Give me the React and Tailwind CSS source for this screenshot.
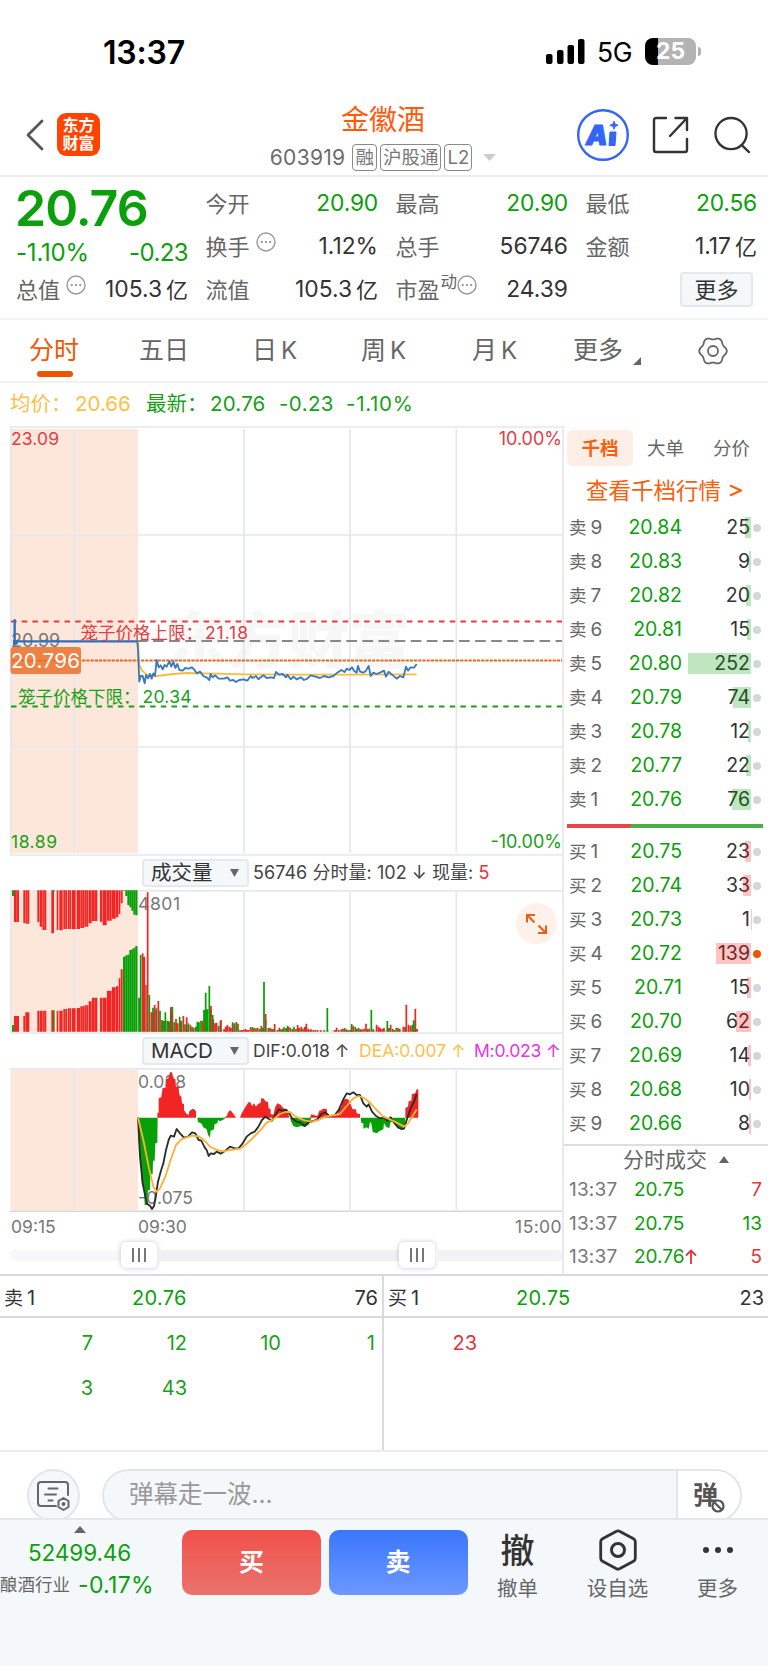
const SELLS = [
  ['卖9', '20.84', 25],
  ['卖8', '20.83', 9],
  ['卖7', '20.82', 20],
  ['卖6', '20.81', 15],
  ['卖5', '20.80', 252],
  ['卖4', '20.79', 74],
  ['卖3', '20.78', 12],
  ['卖2', '20.77', 22],
  ['卖1', '20.76', 76],
]

const BUYS = [
  ['买1', '20.75', 23],
  ['买2', '20.74', 33],
  ['买3', '20.73', 1],
  ['买4', '20.72', 139],
  ['买5', '20.71', 15],
  ['买6', '20.70', 62],
  ['买7', '20.69', 14],
  ['买8', '20.68', 10],
  ['买9', '20.66', 8],
]

const PRICE_LINE =
  '412,664 414,690 418,785 422,768 428,768 434,790 438,765 444,775 450,762 455,776 460,760 465,768 470,720 476,742 482,736 488,748 494,735 500,740 508,724 514,740 520,725 526,744 532,732 538,750 548,752 556,744 566,746 576,742 584,750 590,760 600,755 610,768 620,772 628,780 632,762 638,772 646,766 656,776 672,776 682,772 690,782 700,780 708,786 718,780 730,778 742,782 752,768 758,774 768,768 775,778 790,766 800,774 812,772 822,774 828,756 838,764 848,762 858,772 862,764 872,778 880,770 890,778 902,772 912,780 922,776 932,766 946,770 960,774 972,768 986,772 1000,768 1012,758 1024,750 1034,756 1040,746 1048,750 1056,742 1062,752 1070,758 1074,738 1080,755 1090,758 1098,752 1106,738 1112,768 1120,758 1130,762 1140,758 1152,752 1158,770 1166,755 1176,764 1190,776 1200,768 1210,772 1218,740 1224,752 1232,742 1242,743 1250,732'

const AVG_LINE = '414,665 418,735 426,752 440,764 470,768 520,762 560,759 640,761 740,763 900,764 1040,764 1250,763'

// call auction: [x from, x to, unmatched depth, matched top, colour]
const AUCTION = [
  [36, 42, 138, 525, 'g'], [42, 58, 216, 498, 'r'], [70, 76, 219, 498, 'r'], [76, 89, 221, 487, 'r'],
  [112, 119, 216, 482, 'r'], [119, 127, 230, 482, 'r'], [127, 140, 240, 482, 'r'], [154, 163, 250, 481, 'r'],
  [170, 176, 240, 482, 'r'], [178, 189, 241, 482, 'r'], [190, 202, 237, 477, 'r'], [203, 214, 237, 475, 'r'],
  [215, 228, 238, 475, 'r'], [230, 241, 237, 474, 'r'], [241, 253, 234, 469, 'r'], [253, 266, 230, 466, 'r'],
  [266, 276, 220, 454, 'r'], [276, 293, 213, 443, 'r'], [300, 308, 215, 443, 'r'], [308, 321, 226, 443, 'r'],
  [321, 336, 212, 422, 'r'], [336, 348, 206, 412, 'r'], [348, 356, 202, 409, 'r'], [356, 362, 192, 385, 'r'],
  [362, 369, 160, 358, 'r'], [369, 376, 122, 320, 'g'], [376, 382, 138, 316, 'g'], [382, 388, 165, 314, 'g'],
  [388, 394, 172, 300, 'g'], [394, 400, 182, 298, 'g'], [400, 406, 194, 293, 'g'], [406, 412, 196, 288, 'g'],
]

const VOL_RED = [
  [428, 310], [433, 320], [443, 127], [454, 487], [464, 465], [475, 453], [486, 510], [513, 471], [528, 507],
  [533, 520], [550, 498], [560, 502], [571, 524], [581, 533], [608, 512], [633, 468], [645, 520], [650, 518],
  [663, 510], [672, 538], [677, 530], [682, 525], [688, 530], [693, 533], [709, 516], [725, 541], [730, 539],
  [736, 537], [741, 540], [746, 540], [752, 532], [762, 534], [773, 533], [784, 527], [797, 492], [805, 534],
  [815, 536], [824, 522], [838, 533], [848, 536], [866, 531], [877, 537], [893, 525], [898, 534], [904, 530],
  [914, 531], [919, 521], [925, 536], [933, 538], [940, 540], [952, 540], [962, 541], [1005, 540], [1010, 533],
  [1024, 538], [1034, 534], [1044, 540], [1060, 527], [1076, 534], [1086, 538], [1092, 536], [1098, 521],
  [1108, 536], [1130, 524], [1136, 530], [1141, 535], [1147, 537], [1152, 534], [1172, 524], [1183, 540],
  [1194, 534], [1210, 530], [1219, 464], [1226, 524], [1232, 528], [1246, 476], [1251, 537],
]

const VOL_GREEN = [
  [417, 443], [422, 315], [448, 435], [459, 473], [469, 475], [480, 482], [491, 513], [496, 487], [502, 512],
  [507, 514], [517, 470], [523, 517], [539, 500], [544, 512], [555, 523], [565, 520], [576, 530], [587, 530],
  [592, 515], [597, 517], [603, 512], [612, 480], [617, 428], [622, 478], [628, 408], [638, 495], [656, 527],
  [698, 517], [704, 520], [714, 521], [720, 541], [757, 531], [768, 535], [779, 536], [788, 533], [792, 396],
  [810, 533], [819, 537], [832, 540], [843, 538], [852, 532], [858, 534], [863, 527], [871, 533], [882, 530],
  [888, 537], [909, 536], [930, 541], [946, 541], [972, 541], [982, 474], [1016, 540], [1029, 536], [1039, 538],
  [1050, 540], [1055, 522], [1066, 531], [1071, 536], [1081, 538], [1103, 537], [1114, 480], [1120, 538],
  [1162, 513], [1167, 534], [1178, 536], [1189, 533], [1199, 536], [1215, 531], [1237, 524], [1241, 511],
]

// bars where a buy and a sell column share one pixel column
const VOL_MIXED = [
  [438, 405], [459, 487], [469, 480], [486, 513], [507, 516], [512, 474], [517, 490], [544, 520], [560, 526],
  [632, 478], [640, 508], [661, 514], [698, 522], [797, 510], [1055, 530], [1246, 512],
]

const DIF_LINE =
  '414,233 420,350 428,430 436,470 442,492 450,497 456,507 462,498 468,465 474,425 482,395 490,370 498,330 506,300 512,287 522,290 530,267 540,280 552,293 564,290 576,277 586,280 596,300 604,302 614,322 620,330 626,348 632,340 642,342 650,335 662,341 676,332 690,320 704,325 716,325 728,310 740,290 752,280 764,275 774,262 786,240 796,230 806,236 816,242 826,225 836,208 846,212 858,210 868,220 876,235 890,245 902,248 914,258 926,246 940,243 952,238 964,222 976,217 988,228 1004,226 1016,210 1030,178 1040,160 1050,163 1060,157 1070,165 1080,165 1090,190 1100,200 1106,193 1116,215 1128,228 1140,235 1152,232 1162,243 1172,232 1182,248 1194,262 1204,267 1212,266 1220,240 1232,205 1242,185 1250,162'

const DEA_LINE =
  '414,233 430,300 446,380 460,440 470,455 480,445 496,410 512,360 528,315 544,298 560,292 576,287 596,289 612,300 630,320 650,330 670,334 690,330 720,326 736,315 752,300 770,282 786,265 800,248 820,238 840,222 856,216 870,216 884,228 900,236 916,242 936,245 956,240 976,230 1000,226 1020,222 1040,198 1060,175 1076,168 1092,174 1110,188 1130,210 1150,230 1170,238 1190,248 1212,260 1224,250 1238,228 1250,208'

const MACD_RED = [
  '472,233 472,218 476,218 476,175 484,172 488,143 497,143 497,118 505,115 510,97 516,97 520,115 526,118 528,140 536,140 538,165 544,170 546,190 552,192 552,210 558,220 566,226 568,213 576,208 580,206 588,213 588,233',
  '672,233 680,228 684,218 690,210 696,216 702,224 708,233',
  '720,233 724,222 732,208 738,198 746,186 752,188 756,198 762,190 768,200 774,192 782,188 784,174 792,176 796,184 804,186 806,205 812,208 812,222 820,224 826,200 832,190 842,194 850,205 862,208 868,233',
  '930,233 934,223 944,226 952,228 958,212 966,210 968,206 980,206 982,226 1004,228 1014,222 1016,208 1024,200 1028,182 1036,176 1044,178 1050,188 1058,208 1068,208 1070,220 1080,222 1080,233',
  '1216,233 1216,204 1224,200 1226,184 1234,182 1236,162 1246,160 1250,148 1255,148 1255,233',
]

const MACD_GREEN = [
  '414,233 417,330 422,372 424,405 426,435 432,440 434,495 442,495 444,450 450,450 451,402 458,402 459,362 464,362 466,310 472,308 473,233',
  '592,233 594,246 604,250 610,262 620,268 624,284 630,293 632,272 642,268 644,252 652,250 654,240 660,244 672,238 676,233',
  '870,233 874,246 880,258 890,262 904,258 914,260 926,254 934,233',
  '1082,233 1084,248 1090,250 1090,266 1100,262 1106,267 1110,246 1114,250 1118,276 1130,280 1140,272 1150,268 1152,250 1160,262 1168,264 1172,246 1184,246 1190,258 1204,266 1214,262 1216,233',
]

const UP = '#f22525'
const DOWN = '#08a008'

const bars = (list) => list.map(([x, top]) => `M${x} ${top}V545`).join('')

const gearPath = Array.from({ length: 72 }, (_, i) => {
  const a = (i * Math.PI) / 36
  const r = 12.7 + 1.1 * Math.cos(6 * a)
  return `${i ? 'L' : 'M'}${(15 + r * Math.cos(a)).toFixed(2)} ${(15 + r * Math.sin(a)).toFixed(2)}`
}).join('')

function StatusBar() {
  return (
    <div className="flex h-[91px] items-start justify-between pl-[103px] pr-[67px] pt-[38px]">
      <span className="text-[32px] font-semibold leading-[29px] tracking-[-0.2px] text-black">13:37</span>
      <div className="flex h-[27px] items-center">
        <svg width="39" height="26" viewBox="0 0 39 26">
          <rect x="0" y="15" width="6.5" height="10" rx="2" />
          <rect x="11" y="11" width="6.5" height="14" rx="2" />
          <rect x="21.5" y="6" width="6.5" height="19" rx="2" />
          <rect x="32" y="0" width="6.5" height="25" rx="2" />
        </svg>
        <span className="ml-[12px] w-[48px] pt-[2px] text-[26.5px] leading-none tracking-[-0.3px] text-black">5G</span>
        <span className="relative flex h-[27px] w-[51px] items-center justify-center overflow-hidden rounded-[8px] bg-[linear-gradient(90deg,#000_25%,#b3b3b3_25%)] text-[23px] font-bold leading-none text-white">
          25
        </span>
        <span className="ml-[2px] h-[9px] w-[3px] rounded-r-full bg-[#b3b3b3]" />
      </div>
    </div>
  )
}

function Tag({ children }) {
  return (
    <span className="flex h-[27px] shrink-0 items-center whitespace-nowrap rounded-[4px] border-[1.5px] border-[#8a8a8a] px-[2px] text-[18.5px] leading-none text-[#777]">
      {children}
    </span>
  )
}

function Header() {
  return (
    <header className="flex h-[86px] items-start border-b-2 border-[#ececec] pl-[25px] pr-[16px]">
      <div className="flex w-[226px] items-center pt-[22px]">
        <svg width="19" height="32" viewBox="0 0 19 32" fill="none" stroke="#555" strokeWidth="2.8">
          <path d="M17 2L3 16l14 14" strokeLinecap="round" strokeLinejoin="round" />
        </svg>
        <div className="ml-[13px] flex h-[43px] w-[43px] flex-col items-center justify-center rounded-[9px] bg-[#ff4400] text-[16px] font-bold leading-[17.5px] text-white">
          <span>东方</span>
          <span>财富</span>
        </div>
      </div>
      <div className="ml-[20px] flex w-[224px] flex-col items-center pt-[15px]">
        <span className="text-[28px] leading-[29px] text-[#ff5a0a]">金徽酒</span>
        <div className="mt-[9px] flex h-[27px] items-center gap-[3px]">
          <span className="mr-[4px] text-[21px] leading-none tracking-[0.3px] text-[#6b6b6b]">603919</span>
          <Tag>融</Tag>
          <Tag>沪股通</Tag>
          <Tag>L2</Tag>
          <svg className="ml-[8px] shrink-0" width="13" height="7">
            <path d="M0 0h13L6.500 7z" fill="#ccc" />
          </svg>
        </div>
      </div>
      <div className="ml-auto flex items-center pt-[18px]">
        <svg width="52" height="52" viewBox="0 0 52 52" fill="#3565f6">
          <circle cx="26" cy="26" r="24.8" fill="none" stroke="#3565f6" strokeWidth="2.4" />
          <text x="9" y="36" fontSize="27" fontWeight="900" fontStyle="italic" stroke="#3565f6" strokeWidth="1.2">A</text>
          <path d="M33 23h6l-1 13.500h-6z" stroke="#3565f6" strokeWidth="1" strokeLinejoin="round" />
          <path d="M37 12l1.200 3 3 1.200-3 1.200-1.200 3-1.200-3-3-1.200 3-1.200z" stroke="#3565f6" strokeWidth=".8" />
        </svg>
        <svg className="ml-[23px]" width="37" height="38" viewBox="0 0 37 38" fill="none" stroke="#333" strokeWidth="2.4" strokeLinecap="round">
          <path d="M14 2H4a2 2 0 00-2 2v30a2 2 0 002 2h29a2 2 0 002-2V23M23.500 2H35v12M35 2L18 20" strokeLinejoin="round" />
        </svg>
        <svg className="ml-[25px] mr-[1px]" width="37" height="38" viewBox="0 0 38 38" fill="none" stroke="#333" strokeWidth="2.4" strokeLinecap="round">
          <circle cx="17.500" cy="17.500" r="16" />
          <path d="M28.500 29.500L36 36.500" />
        </svg>
      </div>
    </header>
  )
}

function InfoDot() {
  return (
    <svg width="20" height="20" viewBox="0 0 20 20" className="mb-[10px] shrink-0">
      <circle cx="10" cy="10" r="9" fill="none" stroke="#999" strokeWidth="1.4" />
      <circle cx="5.800" cy="10" r="1.100" fill="#888" />
      <circle cx="10" cy="10" r="1.100" fill="#888" />
      <circle cx="14.200" cy="10" r="1.100" fill="#888" />
    </svg>
  )
}

function Stat({ label, value, unit, green, info, sup }) {
  return (
    <div className="flex h-[43px] items-center whitespace-nowrap leading-none">
      <span className="text-[22px] text-[#666]">{label}</span>
      {sup && <span className="mb-[14px] ml-[1px] text-[16.500px] text-[#666]">{sup}</span>}
      {info && <span className={sup ? 'flex' : 'ml-[6px] flex'}><InfoDot /></span>}
      <span className={`ml-auto text-[22.8px] ${green ? 'tracking-[-0.2px] text-[#0ba00b]' : 'text-[#333]'}`}>{value}</span>
      {unit && <span className="ml-[4px] text-[22px] text-[#333]">{unit}</span>}
    </div>
  )
}

function Quote() {
  return (
    <section className="grid h-[143px] grid-cols-[172px_172.500px_172.500px_171.500px] gap-x-[17.500px] border-b-2 border-[#f2f2f2] pl-[16px] pt-[5px]">
      <div>
        <div className="-ml-[1px] flex h-[52px] items-center text-[50px] font-semibold leading-none tracking-[-1px] text-[#0ba00b]">20.76</div>
        <div className="flex h-[34px] items-center justify-between pt-[4px] text-[24px] leading-none tracking-[-0.2px] text-[#0ba00b]">
          <span>-1.10%</span>
          <span className="tracking-[-0.6px]">-0.23</span>
        </div>
        <Stat label="总值" value="105.3" unit="亿" info />
      </div>
      <div>
        <Stat label="今开" value="20.90" green />
        <Stat label="换手" value="1.12%" info />
        <Stat label="流值" value="105.3" unit="亿" />
      </div>
      <div>
        <Stat label="最高" value="20.90" green />
        <Stat label="总手" value="56746" />
        <Stat label="市盈" value="24.39" info sup="动" />
      </div>
      <div>
        <Stat label="最低" value="20.56" green />
        <Stat label="金额" value="1.17" unit="亿" />
        <div className="flex h-[43px] items-center justify-end pr-[4px]">
          <button className="h-[35px] w-[73px] rounded-[4px] border-2 border-[#e4e9ec] bg-[#f4f8fa] text-[22px] leading-none text-[#333]">更多</button>
        </div>
      </div>
    </section>
  )
}

function KTab({ name }) {
  return (
    <span className="flex items-center gap-[4px]">
      {name}<span className="text-[24px]">K</span>
    </span>
  )
}

function PeriodTabs() {
  return (
    <nav className="flex h-[63px] items-start border-b-2 border-[#f2f2f2] pl-[29px] text-[25px] leading-none text-[#666]">
      <div className="flex w-[110px] flex-col pt-[18px]">
        <span className="text-[#f25600]">分时</span>
        <span className="ml-[8px] mt-[8px] h-[6px] w-[36px] rounded-full bg-[#ee5500]" />
      </div>
      <span className="w-[113px] pt-[18px]">五日</span>
      <div className="w-[109px] pt-[18px]"><KTab name="日" /></div>
      <div className="w-[111px] pt-[18px]"><KTab name="周" /></div>
      <div className="w-[101px] pt-[18px]"><KTab name="月" /></div>
      <span className="pt-[18px]">更多</span>
      <svg className="ml-[10px] mt-[37px]" width="8" height="8">
        <path d="M8 0v8H0z" fill="#666" />
      </svg>
      <svg className="ml-[57px] mt-[16px]" width="30" height="30" viewBox="0 0 30 30" fill="none" stroke="#666" strokeWidth="1.8">
        <path d={`${gearPath}Z`} />
        <circle cx="15" cy="15" r="5" />
      </svg>
    </nav>
  )
}

function PriceChart() {
  return (
    <svg className="block" width="553" height="430" viewBox="0 0 553 430" fontSize="17.500">
      <rect x=".5" y="3" width="127.500" height="424" fill="#fce7da" />
      <text x="156" y="237" fontSize="61" fontWeight="900" fill="#f7f7f7">东方财富</text>
      <g stroke="#e5e7ef" strokeWidth="1.700" fill="none">
        <path d="M0 1H553M0 109H553M0 321H553M0 429H553M.8 1V429M64.200 3V427M234 3V427M340 3V427M446.300 3V427" />
      </g>
      <g fill="none">
        <path d="M1 195.500H553" stroke="#e33c44" strokeWidth="1.800" strokeDasharray="5.500 5.200" />
        <path d="M127 215H553" stroke="#888" strokeWidth="2" strokeDasharray="10.700 5.400" />
        <path d="M1 280.500H553" stroke="#18a018" strokeWidth="1.800" strokeDasharray="5.500 5.200" />
        <path d="M68 234.500H553" stroke="#e8681c" strokeWidth="2" strokeDasharray="3.200 1" />
      </g>
      <text x="1" y="221" fill="#777" fontSize="18">20.99</text>
      <g transform="translate(-10 -6) scale(0.33333)" fill="none" strokeWidth="5.500" strokeLinejoin="round">
        <path d="M44 598V664H412" stroke="#2f6fc0" strokeWidth="7" />
        <path d="M46 660v14" stroke="#2f6fc0" strokeWidth="14" />
        <polyline points={AVG_LINE} stroke="#fdbb3c" />
        <polyline points={PRICE_LINE} stroke="#3a78c0" />
      </g>
      <text x="70.500" y="213" fill="#e33c44">笼子价格上限：</text>
      <text x="195" y="213" fill="#e33c44" textLength="43">21.18</text>
      <text x="8" y="277" fill="#18a018">笼子价格下限：</text>
      <text x="132.500" y="277" fill="#18a018" textLength="49">20.34</text>
      <rect x="0.500" y="221" width="70.500" height="27" rx="3" fill="#ee8144" />
      <path d="M2 234.500H68" stroke="#e8681c" strokeWidth="1.500" strokeDasharray="3 1.500" />
      <text x="1" y="242" fill="#fff" fontSize="20.500" textLength="69">20.796</text>
      <text x="1" y="18.500" fill="#e33c44" textLength="48">23.09</text>
      <text x="552" y="18.500" fill="#e33c44" textAnchor="end" fontSize="18">10.00%</text>
      <text x="1" y="422" fill="#18a018" textLength="46">18.89</text>
      <text x="552" y="422" fill="#18a018" textAnchor="end" fontSize="18">-10.00%</text>
    </svg>
  )
}

function IndicatorSelect({ children }) {
  return (
    <div className="flex h-[28px] w-[107px] shrink-0 items-center justify-between rounded-[4px] border-2 border-[#e3e9ec] bg-[#f4f8fa] pl-[7px] pr-[8px] text-[20.5px] leading-none text-[#333]">
      {children}
      <svg width="9" height="8">
        <path d="M0 0h9L4.500 8z" fill="#666" />
      </svg>
    </div>
  )
}

function VolumeChart() {
  return (
    <div className="relative">
      <svg className="block" width="553" height="144" viewBox="0 0 553 144">
        <rect x=".5" y="2" width="127.500" height="140" fill="#fce7da" />
        <path d="M0 .8H553M0 143H553M.8 1V143M64.200 2V142M234 2V142M340 2V142M446.300 2V142" stroke="#e5e7ef" strokeWidth="1.700" />
        <text x="128" y="20" fontSize="17.500" fill="#777" textLength="42">4801</text>
        <g transform="translate(-10 -40) scale(0.33333)">
          {AUCTION.map(([x0, x1, low, top, c]) => (
            <path
              key={x0}
              d={`M${x0} 121H${c === 'r' ? x1 - 1 : x1 + 0.5}V${low}H${x0}zM${x0} 545H${c === 'r' ? x1 - 1 : x1 + 0.5}V${top}H${x0}z`}
              fill={c === 'r' ? UP : DOWN}
            />
          ))}
          <path d="M162 481v64M162 121v4" stroke={DOWN} strokeWidth="4" />
          <path d="M50 121v95M82 121v100M133 121v119M196 121v116M209 121v116M247 121v113M260 121v109M284 121v92M328 121v91M133 482v63M196 477v68M209 475v70M247 469v76M260 466v79M284 443v102" stroke="#fce7da" strokeOpacity=".45" strokeWidth="1.500" />
          <path d={bars(VOL_GREEN)} stroke={DOWN} strokeWidth="5.200" />
          <path d={bars(VOL_RED)} stroke={UP} strokeWidth="5.200" />
          <path d={bars(VOL_MIXED)} stroke="#8a5420" strokeWidth="4.500" />
          <path d="M414 543H1254" stroke="#a04818" strokeOpacity=".5" strokeWidth="3" strokeDasharray="14 6" />
        </g>
      </svg>
      <button className="absolute right-[6px] top-[13px] flex h-[41px] w-[41px] items-center justify-center rounded-full bg-[#fdf1e9]">
        <svg width="23" height="22" viewBox="0 0 23 22" fill="none" stroke="#ee5d14" strokeWidth="2">
          <path d="M2 9.500V2h8M2 2l7.500 7.500M21 12.500V20h-8M21 20l-7.500-7.500" />
        </svg>
      </button>
    </div>
  )
}

function MacdChart() {
  return (
    <svg className="block" width="553" height="144" viewBox="0 0 553 144">
      <rect x=".5" y="2" width="127.500" height="140" fill="#fce7da" />
      <path d="M0 .8H553M64.200 2V142M234 2V142M340 2V142M446.300 2V142" stroke="#e5e7ef" strokeWidth="1.700" />
      <path d="M0 143.200H553" stroke="#d4d6dc" strokeWidth="1.600" />
      <text x="128" y="20" fontSize="17.500" fill="#777" textLength="48">0.038</text>
      <text x="128" y="136" fontSize="17.500" fill="#777" textLength="55">-0.075</text>
      <g transform="translate(-10 -28) scale(0.33333)" strokeLinejoin="round">
        {MACD_RED.map((p) => <polygon key={p} points={p} fill={UP} />)}
        {MACD_GREEN.map((p) => <polygon key={p} points={p} fill={DOWN} />)}
        <polyline points={DIF_LINE} fill="none" stroke="#2c2c2c" strokeWidth="5.500" />
        <polyline points={DEA_LINE} fill="none" stroke="#f9b233" strokeWidth="5.500" />
      </g>
    </svg>
  )
}

function SliderHandle() {
  return (
    <span className="flex h-[26px] w-[36px] items-center justify-center gap-[4px] rounded-[5px] bg-white shadow-[0_0_5px_rgba(0,0,0,0.22)]">
      <i className="h-[14px] w-[2px] bg-[#777]" />
      <i className="h-[14px] w-[2px] bg-[#777]" />
      <i className="h-[14px] w-[2px] bg-[#777]" />
    </span>
  )
}

function Charts() {
  return (
    <div className="w-[563px] shrink-0 pl-[10px]">
      <PriceChart />
      <div className="flex h-[34px] items-center gap-[4px] whitespace-nowrap pl-[132px] text-[18px] leading-none text-[#444]">
        <IndicatorSelect>成交量</IndicatorSelect>
        <span className="tracking-[0.05px]">56746 分时量: 102 ↓ 现量: <span className="text-[#e8323a]">5</span></span>
      </div>
      <VolumeChart />
      <div className="flex h-[34px] items-center whitespace-nowrap pl-[132px] text-[17.5px] leading-none">
        <IndicatorSelect>MACD</IndicatorSelect>
        <span className="ml-[4px] w-[106px] text-[#444]">DIF:0.018 ↑</span>
        <span className="w-[115px] text-[#fcbf49]">DEA:0.007 ↑</span>
        <span className="tracking-[-0.2px] text-[#e235e8]">M:0.023 ↑</span>
      </div>
      <MacdChart />
      <div className="flex h-[29px] items-center text-[17.5px] leading-none text-[#777]">
        <span className="w-[128px] pl-[1px]">09:15</span>
        <span>09:30</span>
        <span className="ml-auto pr-[1px] tracking-[0.4px]">15:00</span>
      </div>
      <div className="flex h-[28px] items-center">
        <span className="h-[11px] w-[111px] rounded-l-full bg-[#f8f8fa]" />
        <SliderHandle />
        <span className="h-[11px] w-[242px] bg-[#f0f0f2]" />
        <SliderHandle />
        <span className="h-[11px] flex-1 rounded-r-full bg-[#f3f3f5]" />
      </div>
    </div>
  )
}

function DepthRow({ row, side }) {
  const [label, price, qty] = row
  return (
    <div className="flex h-[34px] items-center pl-[5px] leading-none">
      <span className="flex w-[52px] items-center gap-[4px] text-[#666]">
        <span className="text-[17.500px]">{label[0]}</span>
        <span className="text-[19px]">{label[1]}</span>
      </span>
      <span className="w-[61px] text-right text-[19.500px] text-[#0ba00b]">{price}</span>
      <span className="relative flex h-[21px] w-[69px] items-center justify-end pr-[1px] text-[19.500px] text-[#333]">
        {qty}
        <span
          className={`absolute inset-y-0 right-0 ${side === 'sell' ? 'bg-[#00a000]/25' : 'bg-[#ff1010]/25'}`}
          style={{ width: `${qty * 0.25}px` }}
        />
      </span>
      <span className={`ml-[2px] h-[8px] w-[8px] rounded-full ${qty === 139 ? 'bg-[#ee5500]' : 'bg-[#d3d7dd]'}`} />
    </div>
  )
}

function Trade({ price, qty, up, green }) {
  return (
    <div className="flex h-[33.500px] items-center pl-[5px] pr-[6px] text-[19px] leading-none">
      <span className="w-[65px] tracking-[0.2px] text-[#777]">13:37</span>
      <span className="text-[#0ba00b]">{price}</span>
      {up && (
        <svg width="12" height="15" viewBox="0 0 12 15" fill="none" stroke="#e8323a" strokeWidth="1.800">
          <path d="M6 15V1.500M1 6.500l5-5 5 5" />
        </svg>
      )}
      <span className={`ml-auto ${green ? 'text-[#0ba00b]' : 'text-[#e8323a]'}`}>{qty}</span>
    </div>
  )
}

function DepthPanel() {
  return (
    <aside className="-ml-[1px] flex h-[848px] flex-1 flex-col border-l-2 border-[#e8eaf0]">
      <div className="flex h-[40px] items-end text-[18.500px] leading-none text-[#666]">
        <span className="ml-[3px] flex h-[36px] w-[66px] items-center justify-center rounded-[6px] bg-[#feeee5] font-bold text-[#f8600f]">千档</span>
        <span className="flex h-[36px] w-[65px] items-center justify-center">大单</span>
        <span className="flex h-[36px] w-[67px] items-center justify-center">分价</span>
      </div>
      <div className="flex h-[44.500px] items-center gap-[8px] pl-[22px] pt-[5px] text-[22.500px] leading-none text-[#f8600f]">
        查看千档行情
        <svg width="13" height="13" viewBox="0 0 13 13" fill="none" stroke="#f8600f" strokeWidth="2">
          <path d="M1 1.500l11 5-11 5" />
        </svg>
      </div>
      {SELLS.map((r) => <DepthRow key={r[0]} row={r} side="sell" />)}
      <div className="flex h-[18px] items-center pl-[3px]">
        <svg width="196" height="4">
          <rect width="196" height="4" fill="#4caf45" />
          <path d="M0 0h65l-3 4H0z" fill="#e8454c" />
        </svg>
      </div>
      {BUYS.map((r) => <DepthRow key={r[0]} row={r} side="buy" />)}
      <div className="mt-[3.500px] flex h-[29px] items-center gap-[12px] border-t-2 border-[#dcdee4] pl-[59px] text-[21px] leading-none text-[#666]">
        分时成交
        <svg width="10" height="7">
          <path d="M0 7h10L5 0z" fill="#666" />
        </svg>
      </div>
      <Trade price="20.75" qty="7" />
      <Trade price="20.75" qty="13" green />
      <Trade price="20.76" qty="5" up />
    </aside>
  )
}

function QueueHead({ label, price, qty }) {
  return (
    <div className="flex h-[42px] items-center border-b-2 border-[#d9dae1] pl-[4px] pr-[4px] pt-[4px] text-[20px] leading-none text-[#333]">
      <span className="flex w-[128px] items-center gap-[4px]">
        <span className="text-[19px]">{label}</span>1
      </span>
      <span className="tracking-[0.3px] text-[#0ba00b]">{price}</span>
      <span className="ml-auto">{qty}</span>
    </div>
  )
}

function OrderQueue() {
  return (
    <section className="grid h-[178px] grid-cols-[384px_384px] border-b-2 border-t-2 border-b-[#ececf0] border-t-[#d9dae1]">
      <div className="border-r-2 border-[#d9dae1]">
        <QueueHead label="卖" price="20.76" qty="76" />
        <div className="grid grid-cols-[93px_94px_94px_94px] pt-[3px] text-right text-[20px] leading-[45px] text-[#18a018]">
          <span>7</span><span>12</span><span>10</span><span>1</span>
          <span>3</span><span>43</span>
        </div>
      </div>
      <div>
        <QueueHead label="买" price="20.75" qty="23" />
        <div className="grid grid-cols-[93px] pt-[3px] text-right text-[20px] leading-[45px] text-[#e8323a]">
          <span>23</span>
        </div>
      </div>
    </section>
  )
}

function CommentBar() {
  return (
    <div className="flex h-[66px] items-start overflow-hidden pl-[27px] pt-[17px]">
      <div className="flex h-[53px] w-[53px] shrink-0 items-center justify-center rounded-full border-2 border-[#e2e6ea] bg-[#f4f8fa]">
        <svg width="33" height="30" viewBox="0 0 33 30" fill="none" stroke="#666" strokeWidth="2" strokeLinecap="round">
          <path d="M19 25H4a3 3 0 01-3-3V4a3 3 0 013-3h24a3 3 0 013 3v10M11.500 7.500h9M8 13.500h11M11.500 19.500h4" />
          <path d="M26.500 17l5 3v6l-5 3-5-3v-6z" strokeLinejoin="round" />
          <circle cx="26.500" cy="23" r="1" />
        </svg>
      </div>
      <div className="ml-[22px] flex h-[53px] w-[640px] shrink-0 overflow-hidden rounded-full border-2 border-[#e2e6ea] bg-[#f4f8fa]">
        <span className="flex-1 pl-[25px] pt-[11px] text-[24.500px] leading-none text-[#999]">弹幕走一波...</span>
        <span className="relative w-[64px] border-l-2 border-[#e2e6ea] bg-white pl-[15px] pt-[12px] text-[25px] font-bold leading-none text-[#555]">
          弹
          <svg className="absolute left-[33px] top-[28px]" width="14" height="14" viewBox="0 0 14 14">
            <circle cx="7" cy="7" r="5.500" fill="#fff" stroke="#555" strokeWidth="2.200" />
            <path d="M3.500 3.500l7 7" stroke="#555" strokeWidth="2.200" />
          </svg>
        </span>
      </div>
    </div>
  )
}

function ActionBar() {
  return (
    <footer className="flex h-[148px] items-start border-t-2 border-[#e4e8eb] bg-[#f4f8fa] leading-none">
      <div className="flex w-[182px] shrink-0 flex-col whitespace-nowrap pt-[6px]">
        <svg className="ml-[74px]" width="12" height="7">
          <path d="M0 7h12L6 0z" fill="#666" />
        </svg>
        <span className="ml-[28px] mt-[9px] text-[22.500px] tracking-[-0.1px] text-[#0ba00b]">52499.46</span>
        <span className="mt-[9px] flex items-center">
          <span className="text-[17.500px] text-[#666]">酿酒行业</span>
          <span className="ml-[8px] text-[23px] tracking-[0.3px] text-[#0ba00b]">-0.17%</span>
        </span>
      </div>
      <button className="mt-[10px] h-[65px] w-[139px] rounded-[10px] bg-[linear-gradient(#f2504a,#ea736d)] text-[25px] font-bold text-white">买</button>
      <button className="ml-[7.500px] mt-[10px] h-[65px] w-[139px] rounded-[10px] bg-[linear-gradient(#3a76fa,#6c98ff)] text-[25px] font-bold text-white">卖</button>
      <div className="ml-[20px] flex w-[60px] flex-col items-center pt-[14px]">
        <span className="text-[34px] font-medium text-[#333]">撤</span>
        <span className="mt-[11px] text-[20.500px] text-[#666]">撤单</span>
      </div>
      <div className="ml-[30px] flex w-[80px] flex-col items-center pt-[9px]">
        <svg width="38" height="42" viewBox="0 0 38 42" fill="none" stroke="#333" strokeWidth="2.800" strokeLinejoin="round">
          <path d="M17.500 2.200q1.500-.8 3 0l14 7.600q1.800 1 1.800 3v16.400q0 2-1.800 3l-14 7.600q-1.500.8-3 0l-14-7.600q-1.800-1-1.800-3V12.800q0-2 1.800-3z" />
          <circle cx="19" cy="21" r="6.500" strokeWidth="3" />
        </svg>
        <span className="mt-[8px] text-[20.500px] text-[#666]">设自选</span>
      </div>
      <div className="ml-[30px] flex w-[60px] flex-col items-center pt-[9px]">
        <svg width="32" height="42" fill="#333">
          <circle cx="4" cy="21" r="3" />
          <circle cx="16" cy="21" r="3" />
          <circle cx="28" cy="21" r="3" />
        </svg>
        <span className="mt-[8px] text-[20.500px] text-[#666]">更多</span>
      </div>
    </footer>
  )
}

export default function App() {
  return (
    <div className="h-[1666px] w-[768px] overflow-hidden bg-white font-['Inter','Noto_Sans_CJK_SC',sans-serif]">
      <StatusBar />
      <Header />
      <Quote />
      <PeriodTabs />
      <div className="flex h-[43px] items-center whitespace-pre pl-[10px] text-[20.500px] leading-none text-[#18a018]">
        <span className="w-[65px] text-[#fcbf49]">均价：</span>
        <span className="w-[71px] text-[#fcbf49]">20.66</span>
        <span className="w-[64px]">最新：</span>
        <span className="w-[69px] tracking-[0.2px]">20.76</span>
        <span className="w-[67px] tracking-[0.4px]">-0.23</span>
        <span className="tracking-[0.700px]">-1.10%</span>
      </div>
      <main className="flex h-[848px]">
        <Charts />
        <DepthPanel />
      </main>
      <OrderQueue />
      <CommentBar />
      <ActionBar />
    </div>
  )
}
